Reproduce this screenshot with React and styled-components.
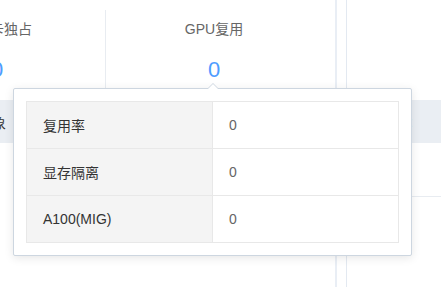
import React from 'react';
import styled, { createGlobalStyle } from 'styled-components';

const GlobalStyle = createGlobalStyle`
  html, body {
    margin: 0;
    padding: 0;
    background: #ffffff;
    font-family: "Liberation Sans", "Noto Sans CJK SC", sans-serif;
  }
  #root {
    width: 441px;
    height: 287px;
    overflow: hidden;
  }
`;

const Page = styled.div`
  position: relative;
  display: flex;
  width: 441px;
  height: 287px;
  overflow: hidden;
`;

const MainColumn = styled.div`
  flex: 0 0 335px;
  border-right: 2px solid #e9eef5;
  display: flex;
  flex-direction: column;
`;

const Gutter = styled.div`
  flex: 0 0 9px;
  border-right: 1px solid #e3e9f1;
`;

const SideColumn = styled.div`
  flex: 1;
  display: flex;
  flex-direction: column;
  padding-top: 100px;
`;

const StatsRow = styled.div`
  display: flex;
  height: 100px;
  margin-left: -111px;
  padding-top: 10px;
  box-sizing: border-box;
`;

const StatCell = styled.div`
  flex: 0 0 216px;
  height: 80px;
  display: flex;
  flex-direction: column;
  align-items: center;
  border-right: ${(p) => (p.$divider ? '1px solid #e8ecf1' : 'none')};
`;

const StatLabel = styled.div`
  margin-top: 11px;
  font-size: 14px;
  line-height: 17px;
  color: #666666;
`;

const StatValue = styled.div`
  margin-top: 20px;
  font-size: 22px;
  line-height: 24px;
  color: #4e9cff;
`;

const Band = styled.div`
  height: 43px;
  background: #eaeef3;
  display: flex;
  align-items: center;
  font-size: 14px;
  color: #333333;
  margin-left: ${(p) => (p.$shift ? '-50px' : '0')};
`;

const Colon = styled.span`
  margin-left: 62px;
  color: #7d9ac0;
`;

const SideLine = styled.div`
  margin-top: 53px;
  border-top: 1px solid #e8ecf1;
`;

const Popover = styled.div`
  position: absolute;
  left: 13px;
  top: 88px;
  width: 399px;
  box-sizing: border-box;
  padding: 12px;
  background: #ffffff;
  border: 1px solid #cdd6e0;
  border-radius: 2px;
  box-shadow: 0 2px 10px rgba(0, 0, 0, 0.1);

  &::before,
  &::after {
    content: '';
    position: absolute;
    left: 193px;
    width: 0;
    height: 0;
    border-left: 6px solid transparent;
    border-right: 6px solid transparent;
  }
  &::before {
    top: -6px;
    border-bottom: 6px solid #cdd6e0;
  }
  &::after {
    top: -5px;
    border-bottom: 6px solid #ffffff;
  }
`;

const Table = styled.table`
  width: 100%;
  border-collapse: collapse;
  table-layout: fixed;
  font-size: 14px;
`;

const Row = styled.tr`
  height: 47px;
`;

const LabelCell = styled.td`
  width: 50%;
  padding: 0 16px;
  background: #f4f4f4;
  border: 1px solid #e8e8e8;
  color: #333333;
`;

const ValueCell = styled.td`
  width: 50%;
  padding: 0 16px;
  border: 1px solid #e8e8e8;
  color: #666666;
`;

const rows = [
  { label: '复用率', value: 0 },
  { label: '显存隔离', value: 0 },
  { label: 'A100(MIG)', value: 0 },
];

export default function App() {
  return (
    <>
      <GlobalStyle />
      <Page>
        <MainColumn>
          <StatsRow>
            <StatCell $divider>
              <StatLabel>物理卡独占</StatLabel>
              <StatValue>0</StatValue>
            </StatCell>
            <StatCell>
              <StatLabel>GPU复用</StatLabel>
              <StatValue>0</StatValue>
            </StatCell>
          </StatsRow>
          <Band $shift>调度对象</Band>
        </MainColumn>
        <Gutter />
        <SideColumn>
          <Band>
            <Colon>:</Colon>
          </Band>
          <SideLine />
        </SideColumn>
        <Popover>
          <Table>
            <tbody>
              {rows.map((r) => (
                <Row key={r.label}>
                  <LabelCell>{r.label}</LabelCell>
                  <ValueCell>{r.value}</ValueCell>
                </Row>
              ))}
            </tbody>
          </Table>
        </Popover>
      </Page>
    </>
  );
}
